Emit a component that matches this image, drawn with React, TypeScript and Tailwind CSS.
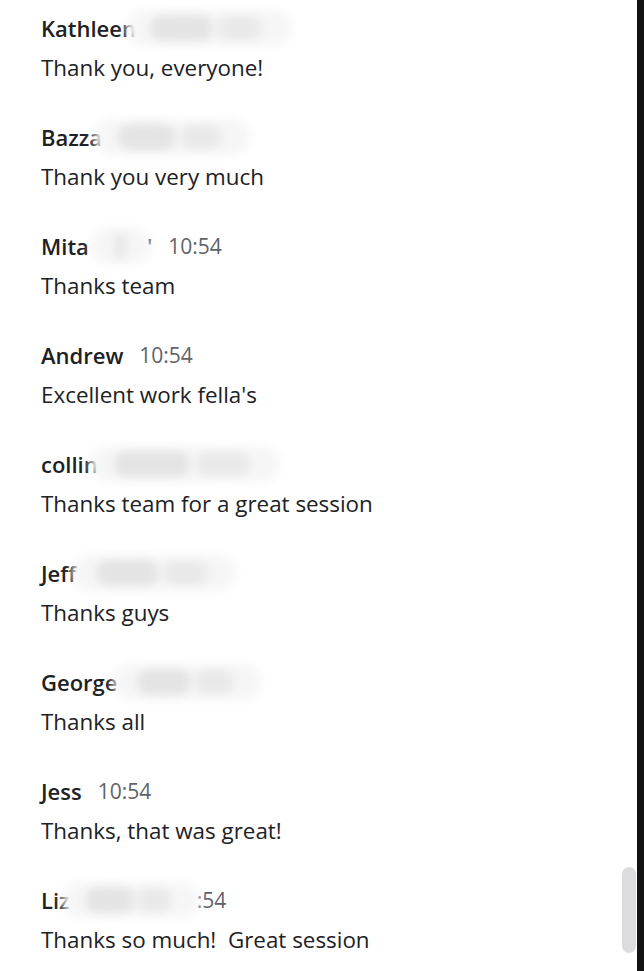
import React from "react";

type Msg = {
  name: string;
  time?: string;
  text: string;
  // hidden surname: overlap with the name end, and width of the smudge
  blur?: { overlap: number; width: number };
  tail?: string;
};

const messages: Msg[] = [
  { name: "Kathleen", text: "Thank you, everyone!", blur: { overlap: 10, width: 165 } },
  { name: "Bazza", text: "Thank you very much", blur: { overlap: 8, width: 156 } },
  { name: "Mita", time: "10:54", text: "Thanks team", blur: { overlap: -2, width: 60 }, tail: "'" },
  { name: "Andrew", time: "10:54", text: "Excellent work fella's" },
  { name: "collin", text: "Thanks team for a great session", blur: { overlap: 8, width: 190 } },
  { name: "Jeff", text: "Thanks guys", blur: { overlap: 4, width: 164 } },
  { name: "George", text: "Thanks all", blur: { overlap: 4, width: 148 } },
  { name: "Jess", time: "10:54", text: "Thanks, that was great!" },
  { name: "Liz", text: "Thanks so much!  Great session", blur: { overlap: 8, width: 137 }, tail: ":54" },
];

function Smudge({ overlap, width }: { overlap: number; width: number }) {
  return (
    <div
      className="z-10 flex h-[36px] shrink-0 items-center gap-[4%] rounded-full bg-[#f6f6f6] px-[4%] blur-[5px]"
      style={{ marginLeft: -overlap, width }}
    >
      <div className="h-[26px] w-[54%] rounded-full bg-[#e4e4e4]" />
      <div className="h-[24px] w-[38%] rounded-full bg-[#e9e9e9]" />
    </div>
  );
}

function Message({ m }: { m: Msg }) {
  return (
    <div className="flex flex-col gap-[13px]">
      <div className="flex h-[28px] items-center leading-[28px]">
        <span className="text-[22px] font-semibold text-[#202124]">{m.name}</span>
        {m.blur && <Smudge {...m.blur} />}
        {m.tail && (
          <span
            className={
              m.time
                ? "-ml-[4px] text-[22px] font-semibold text-[#202124]"
                : "-ml-[2px] text-[21px] text-[#5f6368]"
            }
          >
            {m.tail}
          </span>
        )}
        {m.time && <span className="ml-[16px] text-[21px] text-[#5f6368]">{m.time}</span>}
      </div>
      <div className="-mt-[1px] h-[28px] whitespace-pre text-[22.4px] leading-[28px] text-[#202124]">{m.text}</div>
    </div>
  );
}

export default function App() {
  return (
    <div
      className="relative flex h-[971px] w-[644px] overflow-hidden bg-white"
      style={{ fontFamily: "'Open Sans', 'Noto Sans', sans-serif" }}
    >
      <div className="flex flex-1 flex-col gap-[41px] pl-[41px] pt-[14px]">
        {messages.map((m, i) => (
          <Message key={i} m={m} />
        ))}
      </div>
      <div className="w-[7px] bg-[#121212]" />
      <div className="absolute left-[622px] top-[867px] h-[86px] w-[14px] rounded-full bg-[#dcdcde]" />
    </div>
  );
}
